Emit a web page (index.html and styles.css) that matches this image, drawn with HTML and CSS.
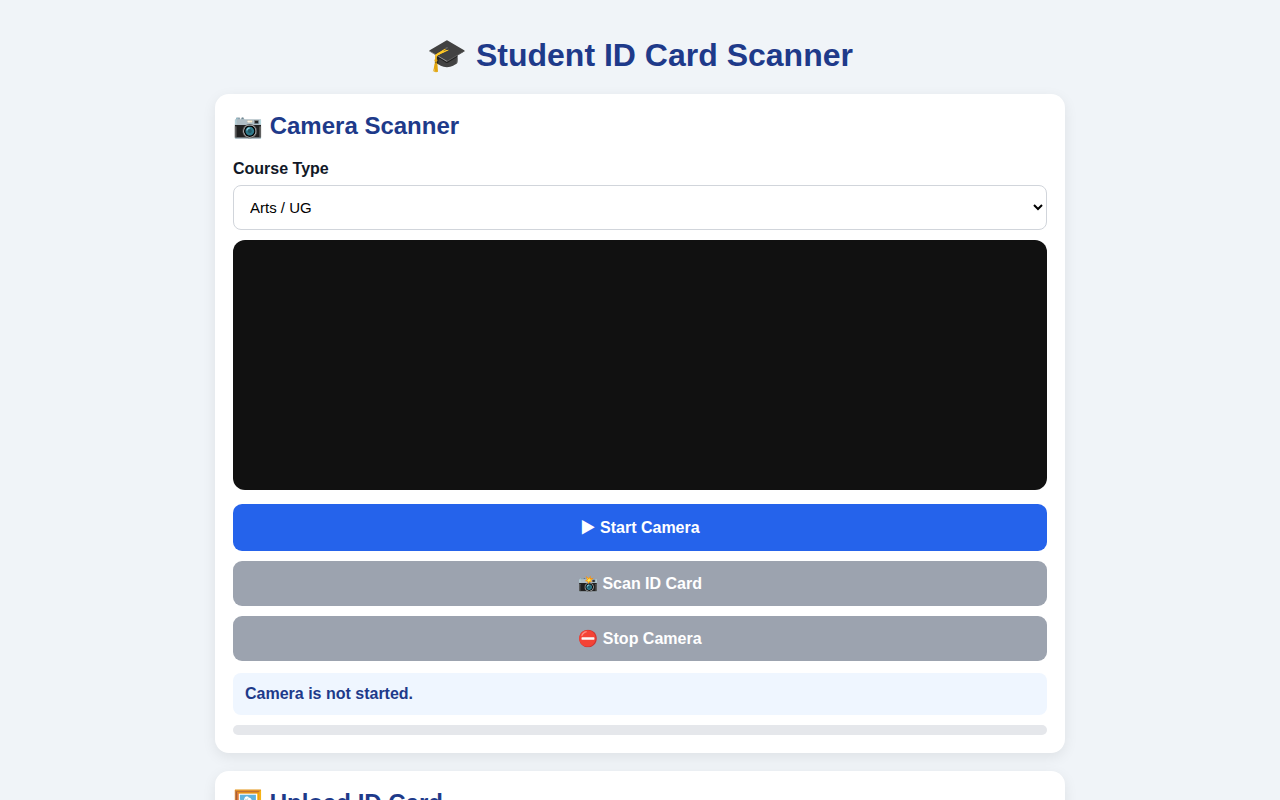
FILE: index.html
```html
<!DOCTYPE html>
<html lang="en">

<head>
    <meta charset="UTF-8">
    <meta name="viewport" content="width=device-width, initial-scale=1.0">
    <title>Student ID Card Scanner</title>
    <link rel="stylesheet" href="styles.css">
</head>

<body>
    <div class="container">
        <h1>🎓 Student ID Card Scanner</h1>

        <div class="card">
            <h2>📷 Camera Scanner</h2>
            <label for="courseType">Course Type</label>
            <select id="courseType">
                <option value="arts">Arts / UG</option>
            </select>
            <video id="video" autoplay playsinline muted></video>
            <button type="button" id="startBtn" class="start-btn">▶ Start Camera</button>
            <button type="button" id="scanBtn" disabled>📸 Scan ID Card</button>
            <button type="button" id="stopBtn" disabled>⛔ Stop Camera</button>
            <div class="status" id="status">Camera is not started.</div>
            <div class="progress"></div>
        </div>

        <div class="card">
            <h2>🖼️ Upload ID Card</h2>
        </div>
    </div>
</body>

</html>
```

FILE: styles.css
```css
* {
    box-sizing: border-box;
}

body {
    margin: 0;
    padding: 18px;
    background: #f0f4f8;
    color: #111827;
    font-family: Arial, "Liberation Sans", sans-serif;
}

.container {
    max-width: 850px;
    margin: 0 auto;
}

h1 {
    margin: 18px 0 20px;
    text-align: center;
    color: #1e3a8a;
}

h2 {
    margin: 0 0 20px;
    color: #1e3a8a;
}

.card {
    margin-bottom: 18px;
    padding: 18px;
    background: #fff;
    border-radius: 14px;
    box-shadow: 0 4px 14px rgba(0, 0, 0, 0.08);
}

label {
    display: block;
    margin-bottom: 7px;
    font-weight: bold;
}

select {
    display: block;
    width: 100%;
    margin-bottom: 10px;
    padding: 12px;
    border: 1px solid #d1d5db;
    border-radius: 8px;
    background: #fff;
    font-family: inherit;
    font-size: 15px;
}

video {
    display: block;
    width: 100%;
    height: 250px;
    margin-bottom: 14px;
    border-radius: 12px;
    background: #111;
}

button {
    display: block;
    width: 100%;
    margin-top: 10px;
    padding: 13px;
    border: none;
    border-radius: 9px;
    background: #2563eb;
    color: #fff;
    font-family: inherit;
    font-size: 16px;
    font-weight: bold;
    cursor: pointer;
}

button:disabled {
    background: #9ca3af;
    cursor: not-allowed;
}

/* play symbol comes from Inter */
.start-btn {
    font-family: Arial, "Liberation Sans", Inter, sans-serif;
    line-height: 21px;
}

.status {
    margin-top: 12px;
    padding: 12px;
    border-radius: 8px;
    background: #eff6ff;
    color: #1e3a8a;
    font-weight: bold;
}

.progress {
    height: 10px;
    margin-top: 10px;
    border-radius: 5px;
    background: #e5e7eb;
}
```
